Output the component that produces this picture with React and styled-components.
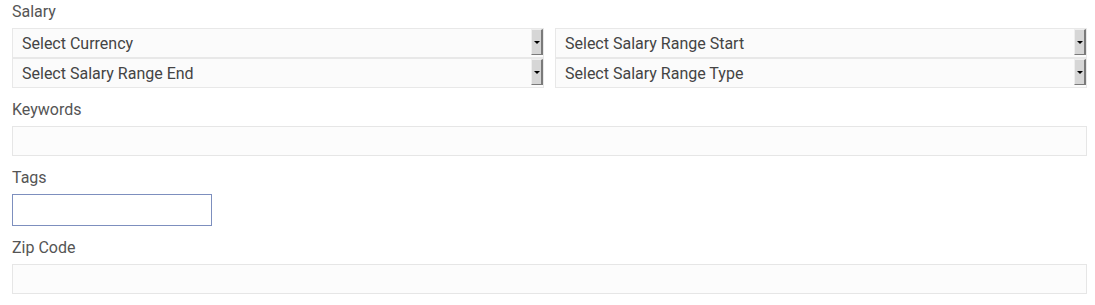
import React from 'react';
import styled, { createGlobalStyle } from 'styled-components';

const GlobalStyle = createGlobalStyle`
    body {
        margin: 0;
        background: #fff;
        font-family: Roboto, "Liberation Sans", Arial, sans-serif;
    }
`

const salarySelects = [
    'Select Currency',
    'Select Salary Range Start',
    'Select Salary Range End',
    'Select Salary Range Type',
];

const App = () => {
    return (
        <>
            <GlobalStyle />
            <Form>
                <Field>
                    <Label>Salary</Label>
                    <SelectGrid>
                        {
                            salarySelects.map(s => (
                                <Select key={s}>
                                    <span>{s}</span>
                                    <Arrow />
                                </Select>
                            ))
                        }
                    </SelectGrid>
                </Field>
                <Field>
                    <Label>Keywords</Label>
                    <Input />
                </Field>
                <Field>
                    <Label>Tags</Label>
                    <TagInput />
                </Field>
                <Field>
                    <Label>Zip Code</Label>
                    <Input />
                </Field>
            </Form>
        </>
    )
}

export default App;

const Form = styled.div`
    width: 1075px;
    padding: 2px 8px 0 12px;
    display: flex;
    flex-direction: column;
    gap: 12px;
`

const Field = styled.div`
    display: flex;
    flex-direction: column;
`

const Label = styled.label`
    font-size: 16px;
    line-height: 19px;
    color: #555;
    margin-bottom: 7px;
`

const SelectGrid = styled.div`
    display: grid;
    grid-template-columns: 532px 532px;
    column-gap: 11px;
`

const Select = styled.div`
    position: relative;
    height: 30px;
    box-sizing: border-box;
    border: 1px solid #e8e8e8;
    background: #fbfbfb;
    display: flex;
    align-items: center;
    padding-left: 9px;
    font-size: 16px;
    color: #444;
`

const Arrow = styled.div`
    position: absolute;
    top: 0;
    right: 0;
    width: 12px;
    height: 26px;
    box-sizing: border-box;
    background: #d6d6d6;
    border-right: 2px solid #7a7a7a;
    border-bottom: 1px solid #7a7a7a;
    border-top: 1px solid #eee;
    border-left: 1px solid #eee;
    &::after {
        content: '';
        position: absolute;
        left: 2px;
        top: 11px;
        border-left: 3px solid transparent;
        border-right: 3px solid transparent;
        border-top: 3px solid #000;
    }
`

const Input = styled.div`
    height: 30px;
    box-sizing: border-box;
    border: 1px solid #e6e6e6;
    background: #fcfcfc;
`

const TagInput = styled.div`
    width: 200px;
    height: 32px;
    box-sizing: border-box;
    border: 1px solid #7d8fbe;
    background: #fff;
`
